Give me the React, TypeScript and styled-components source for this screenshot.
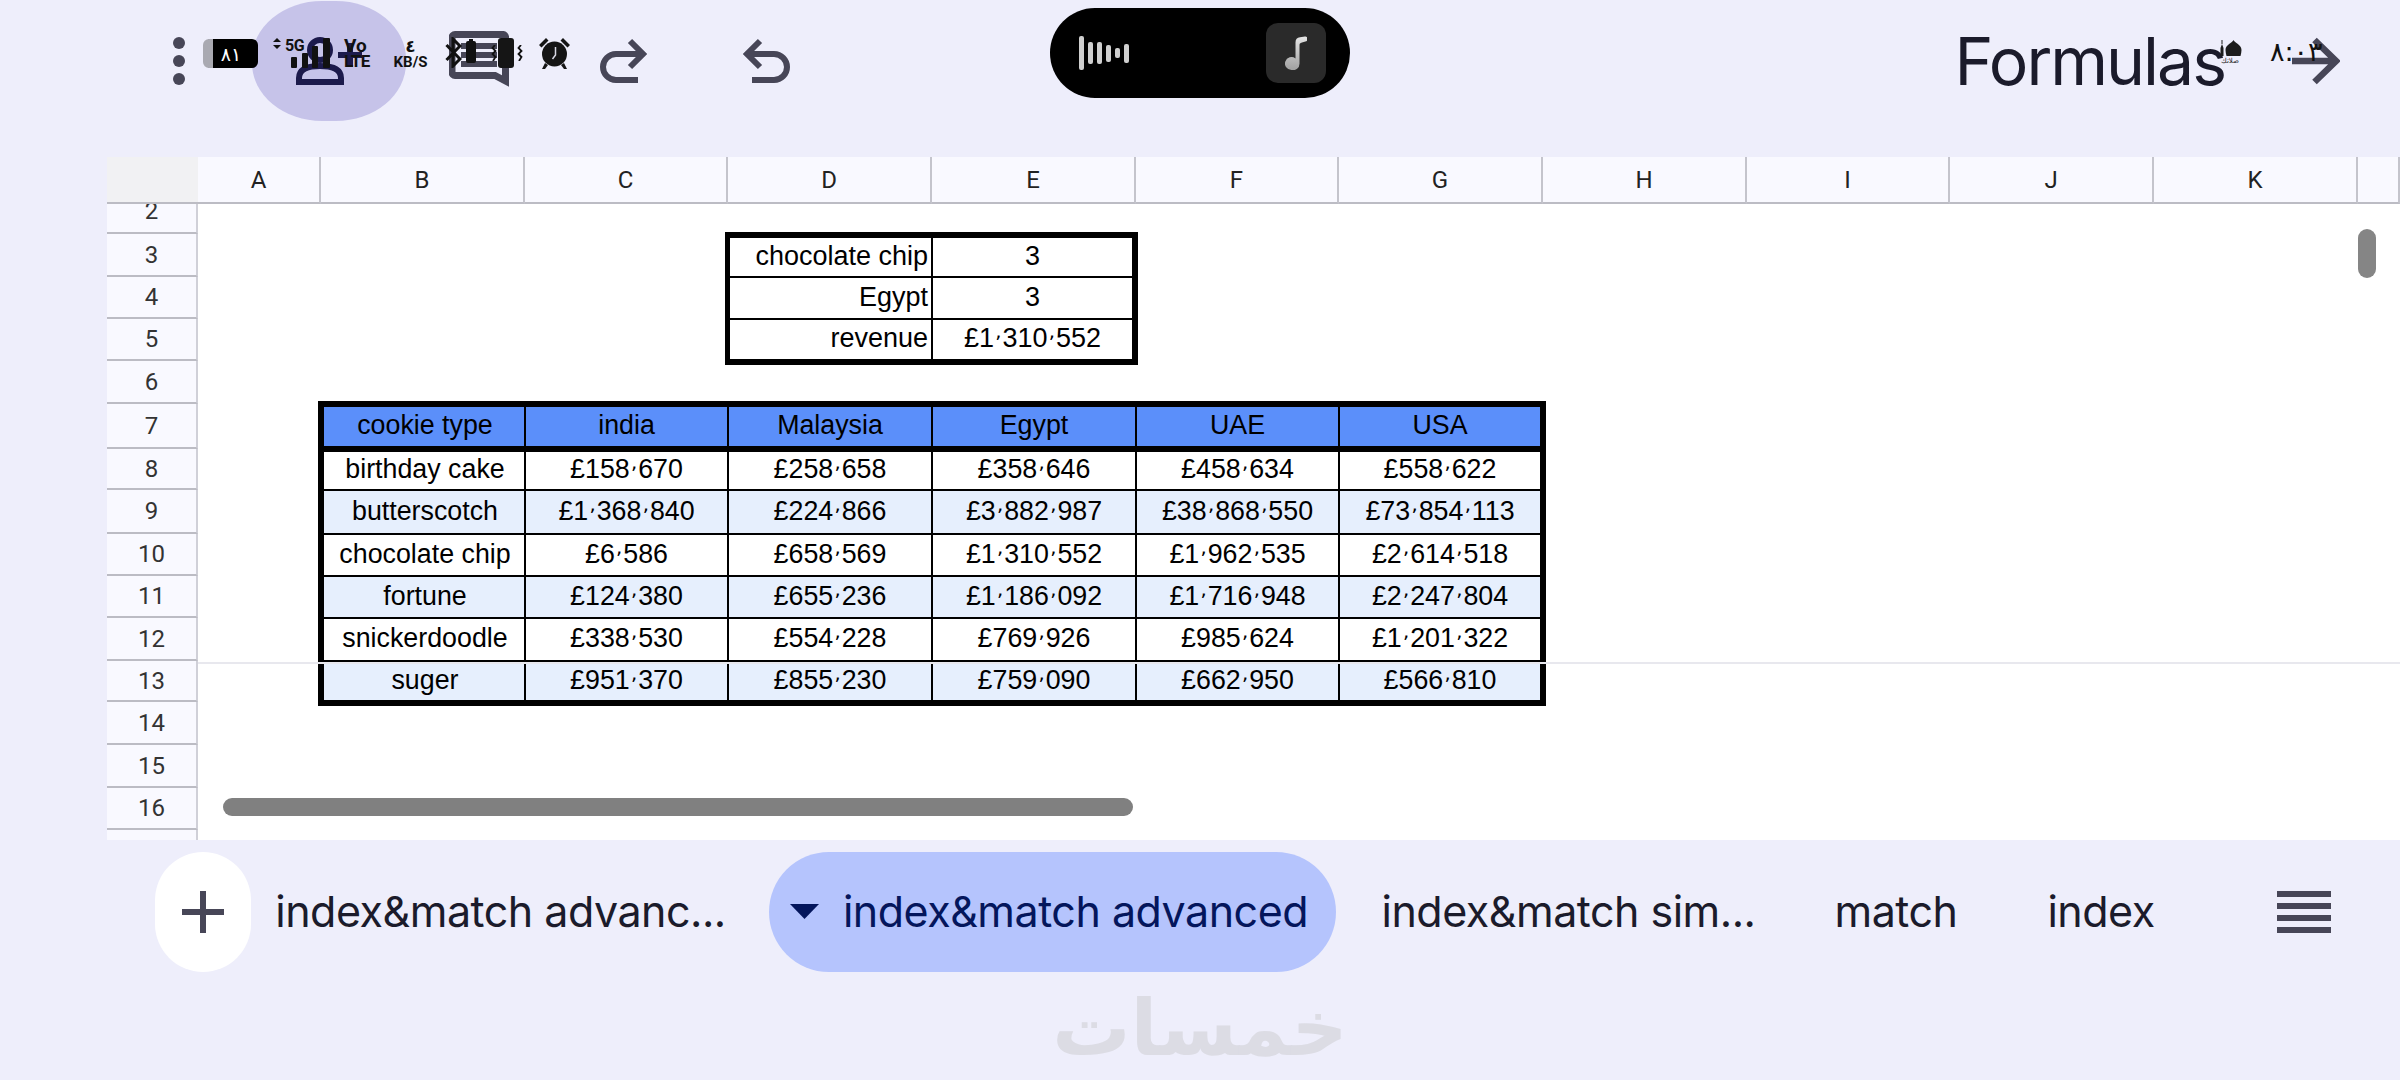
import { Fragment } from "react";
import styled, { createGlobalStyle } from "styled-components";

const COLS = ["A", "B", "C", "D", "E", "F", "G", "H", "I", "J", "K", ""];
const ROWS = [2, 3, 4, 5, 6, 7, 8, 9, 10, 11, 12, 13, 14, 15, 16, 17];

const SMALL_TABLE = [
  ["chocolate chip", "3"],
  ["Egypt", "3"],
  ["revenue", "£1٬310٬552"],
];

const BIG_TABLE = [
  ["cookie type", "india", "Malaysia", "Egypt", "UAE", "USA"],
  ["birthday cake", "£158٬670", "£258٬658", "£358٬646", "£458٬634", "£558٬622"],
  ["butterscotch", "£1٬368٬840", "£224٬866", "£3٬882٬987", "£38٬868٬550", "£73٬854٬113"],
  ["chocolate chip", "£6٬586", "£658٬569", "£1٬310٬552", "£1٬962٬535", "£2٬614٬518"],
  ["fortune", "£124٬380", "£655٬236", "£1٬186٬092", "£1٬716٬948", "£2٬247٬804"],
  ["snickerdoodle", "£338٬530", "£554٬228", "£769٬926", "£985٬624", "£1٬201٬322"],
  ["suger", "£951٬370", "£855٬230", "£759٬090", "£662٬950", "£566٬810"],
];

// the thousands separator comes from another font in the sheet
function Money({ text }: { text: string }) {
  const parts = text.split("٬");
  return (
    <span>
      {parts.map((p, i) => (
        <Fragment key={i}>
          {i > 0 && <Sep>٬</Sep>}
          {p}
        </Fragment>
      ))}
    </span>
  );
}

function App() {
  return (
    <Page>
      <GlobalStyle />
      <TopBar>
        <ToolButton>
          <Dots>
            <Dot />
            <Dot />
            <Dot />
          </Dots>
        </ToolButton>
        <ContactPill>
          <svg width="66" height="48" viewBox="0 0 66 48" fill="none" stroke="#1c1a4c" strokeWidth="6">
            <circle cx="24" cy="13" r="10" />
            <path d="M3 45v-4c0-9 9-12 21-12s21 3 21 12v4z" />
            <path d="M42 18h24M54 6v24" />
          </svg>
        </ContactPill>
        <ToolButton>
          <svg width="60" height="60" viewBox="0 0 60 60" fill="none" stroke="#474657" strokeWidth="7">
            <path d="M6 3.500h47a3 3 0 0 1 3.500 3.500V50L46 44.500H6a3 3 0 0 1-3-3V6.500a3 3 0 0 1 3-3z" />
            <path d="M12 15h36M12 24h36M12 33h36" strokeWidth="6" />
          </svg>
        </ToolButton>
        <ToolButton>
          <svg width="48" height="46" viewBox="0 0 48 46" fill="none" stroke="#474657" strokeWidth="6">
            <path d="M31 3l13 13-13 13M44 16H17a13 13 0 0 0 0 26h22" />
          </svg>
        </ToolButton>
        <ToolButton>
          <svg width="48" height="46" viewBox="0 0 48 46" fill="none" stroke="#474657" strokeWidth="6">
            <path d="M17 3L4 16l13 13M4 16h27a13 13 0 0 1 0 26H9" />
          </svg>
        </ToolButton>
        <TitleGroup>
          <Title>Formulas</Title>
          <svg width="48" height="48" viewBox="0 0 48 48" fill="none" stroke="#474657" strokeWidth="6.500">
            <path d="M0 24h43M22.500 3L44 24 22.500 45" />
          </svg>
        </TitleGroup>

        <StatusLeft>
          <Battery>
            <BatteryLevel>٨١</BatteryLevel>
          </Battery>
          <NetStack>
            <svg width="57" height="31" viewBox="0 0 57 31" fill="#111">
              <path d="M0 5l4-4 4 4zM0 8l4 4 4-4z" />
              <rect x="18" y="20" width="6" height="11" rx="1" />
              <rect x="29" y="16" width="6" height="15" rx="1" />
              <rect x="39" y="9" width="6" height="22" rx="1" />
              <rect x="50" y="1" width="7" height="30" rx="1" />
            </svg>
            <FiveG>5G</FiveG>
          </NetStack>
          <VoStack>
            <VoText>Vo</VoText>
            <LteText>LTE</LteText>
          </VoStack>
          <SpeedStack>
            <SpeedValue>٤</SpeedValue>
            <SpeedUnit>KB/S</SpeedUnit>
          </SpeedStack>
          <BluetoothIcon width="17" height="31" viewBox="0 0 17 31" fill="none" stroke="#111" strokeWidth="3">
            <path d="M1.500 8L15 22l-7 7V2l7 7L1.500 23" />
          </BluetoothIcon>
          <SmallBattery />
          <WaveIcon width="6" height="16" viewBox="0 0 6 16" fill="none" stroke="#111" strokeWidth="1.800" $left={15}>
            <path d="M4 0L1.500 3 4.500 6 1.500 9 4.500 12 2 16" />
          </WaveIcon>
          <PhoneBody />
          <WaveIcon width="6" height="16" viewBox="0 0 6 16" fill="none" stroke="#111" strokeWidth="1.800" $left={3}>
            <path d="M4 0L1.500 3 4.500 6 1.500 9 4.500 12 2 16" />
          </WaveIcon>
          <AlarmIcon width="31" height="32" viewBox="0 0 31 32">
            <circle cx="15.500" cy="17" r="12.500" fill="#151515" />
            <path d="M0 8l7-7 2.500 2.500-7 7zM31 8l-7-7-2.500 2.500 7 7z" fill="#151515" />
            <path d="M6 26l-3 6h3l3-4zM25 26l3 6h-3l-3-4z" fill="#151515" />
            <path d="M16.500 10v8l-3 4" fill="none" stroke="#d8d8e4" strokeWidth="1.500" />
          </AlarmIcon>
        </StatusLeft>

        <Island>
          <Wave>
            <WaveBar $h={34} />
            <WaveBar $h={22} />
            <WaveBar $h={22} />
            <WaveBar $h={17} />
            <WaveBar $h={10} />
            <WaveBar $h={19} />
          </Wave>
          <MusicTile>
            <svg width="22" height="34" viewBox="0 0 22 34" fill="none">
              <defs>
                <linearGradient id="note" x1="0" y1="0" x2="0" y2="1">
                  <stop offset="0" stopColor="#e4e4e4" />
                  <stop offset="1" stopColor="#a0a0a0" />
                </linearGradient>
              </defs>
              <path
                d="M6.500 34a6.500 6.500 0 1 1 4-11.600V6.500C10.500 3 12 1.500 15 1.200L20 0.600a1.800 1.800 0 0 1 .4 4.800L17 6.400c-2 .5-2.500 1-2.500 2.500V27.500A6.500 6.500 0 0 1 6.500 34z"
                fill="url(#note)"
              />
            </svg>
          </MusicTile>
        </Island>

        <StatusRight>
          <Mosque>
            <svg width="24" height="18" viewBox="0 0 24 18" fill="#1c1c1c">
              <path d="M3.500 0h1v4h-1zM2.500 8l1.500-4 1.500 4v8h-3z" />
              <path d="M15.500 0c1 3 8 4.500 8 10 0 2-.5 4-1 6H8.500c-.5-2-1-4-1-6 0-5.500 7-7 8-10z" />
            </svg>
            <MosqueLabel>صلاتك</MosqueLabel>
          </Mosque>
          <Clock>٨:٠٣</Clock>
        </StatusRight>
      </TopBar>

      <Sheet>
        <Corner />
        {COLS.map((c, i) => (
          <ColHead key={i} $col={i + 2}>
            {c}
          </ColHead>
        ))}
        {ROWS.map((r) => (
          <RowHead key={r} $row={r} $clipped={r === 2} $open={r === 17}>
            {r === 17 ? "" : r}
          </RowHead>
        ))}

        <SmallGrid>
          {SMALL_TABLE.map((row, i) => (
            <Fragment key={i}>
              <LabelCell $last={i === 2}>{row[0]}</LabelCell>
              <ValueCell $last={i === 2}>
                <Money text={row[1]} />
              </ValueCell>
            </Fragment>
          ))}
        </SmallGrid>

        <BigGrid>
          {BIG_TABLE.flatMap((row, r) =>
            row.map((text, c) => (
              <DataCell
                key={r + "-" + c}
                $head={r === 0}
                $stripe={r > 0 && r % 2 === 0}
                $lastCol={c === 5}
                $lastRow={r === 6}
              >
                <Money text={text} />
              </DataCell>
            ))
          )}
        </BigGrid>

        <FreezeLine />
        <HScroll />
        <VScroll />
      </Sheet>

      <BottomBar>
        <TabRow>
          <AddButton>
            <svg width="42" height="42" viewBox="0 0 42 42" stroke="#474657" strokeWidth="6">
              <path d="M0 21h42M21 0v42" />
            </svg>
          </AddButton>
          <Tab $w={499}>index&amp;match advanc...</Tab>
          <ActiveTab>
            <svg width="29" height="15" viewBox="0 0 29 15" fill="#04165c">
              <path d="M0 0h29L14.500 15z" />
            </svg>
            index&amp;match advanced
          </ActiveTab>
          <Tab $w={465}>index&amp;match sim...</Tab>
          <Tab $w={190}>match</Tab>
          <Tab $w={220}>index</Tab>
          <MenuLines>
            <MenuLine />
            <MenuLine />
            <MenuLine />
            <MenuLine />
          </MenuLines>
        </TabRow>
        <Watermark>خمسات</Watermark>
      </BottomBar>
    </Page>
  );
}

export default App;

const GlobalStyle = createGlobalStyle`
  html, body {
    margin: 0;
    padding: 0;
    background: #eeeefb;
    overflow: hidden;
  }
`;

const Page = styled.div`
  width: 2400px;
  height: 1080px;
  background: #eeeefb;
  display: flex;
  flex-direction: column;
  font-family: "Liberation Sans", Arial, sans-serif;
  overflow: hidden;
`;

const TopBar = styled.div`
  position: relative;
  height: 157px;
  flex: none;
  padding: 1px 60px 0 107px;
  box-sizing: border-box;
  display: flex;
  align-items: flex-start;
`;

const ToolButton = styled.div`
  width: 144px;
  height: 120px;
  display: flex;
  align-items: center;
  justify-content: center;
`;

const Dots = styled.div`
  display: flex;
  flex-direction: column;
  gap: 6px;
`;

const Dot = styled.span`
  width: 12px;
  height: 12px;
  border-radius: 50%;
  background: #474657;
`;

const ContactPill = styled.div`
  width: 154px;
  height: 120px;
  margin: 0 1px;
  border-radius: 70px / 58px;
  background: #c6c3e9;
  display: flex;
  align-items: center;
  justify-content: center;
`;

const TitleGroup = styled.div`
  margin-left: auto;
  height: 120px;
  display: flex;
  align-items: center;
  gap: 67px;
`;

const Title = styled.div`
  font-family: "Inter", sans-serif;
  font-size: 66px;
  font-weight: 400;
  letter-spacing: -2px;
  color: #1b1b2b;
`;

const StatusLeft = styled.div`
  position: absolute;
  left: 203px;
  top: 37px;
  height: 32px;
  display: flex;
  align-items: flex-start;
`;

const Battery = styled.div`
  width: 55px;
  height: 29px;
  margin-top: 2px;
  box-sizing: border-box;
  padding-right: 9px;
  border-left: 10px solid #a9a9b1;
  border-radius: 6px;
  background: #000;
  display: flex;
  align-items: center;
  justify-content: center;
`;

const BatteryLevel = styled.span`
  font-family: "DejaVu Sans", sans-serif;
  font-size: 19px;
  line-height: 24px;
  color: #fff;
`;

const NetStack = styled.div`
  position: relative;
  width: 71px;
  height: 32px;
  margin-left: 15px;
`;

const FiveG = styled.span`
  position: absolute;
  left: 12px;
  top: -1px;
  font-family: "Roboto", sans-serif;
  font-size: 16px;
  font-weight: 700;
  letter-spacing: -0.500px;
  color: #111;
`;

const VoStack = styled.div`
  width: 27px;
  display: flex;
  flex-direction: column;
  color: #111;
  font-family: "Roboto", sans-serif;
  font-weight: 700;
`;

const VoText = styled.span`
  font-size: 19px;
  line-height: 17px;
`;

const LteText = styled.span`
  font-size: 17px;
  line-height: 15px;
  letter-spacing: -0.500px;
`;

const SpeedStack = styled.div`
  width: 37px;
  margin-left: 21px;
  display: flex;
  flex-direction: column;
  align-items: center;
  color: #111;
`;

const SpeedValue = styled.span`
  font-family: "DejaVu Sans", sans-serif;
  font-size: 17px;
  font-weight: 700;
  line-height: 18px;
`;

const SpeedUnit = styled.span`
  font-family: "Roboto", sans-serif;
  font-size: 15px;
  font-weight: 700;
  line-height: 14px;
`;

const BluetoothIcon = styled.svg`
  margin-left: 16px;
`;

const SmallBattery = styled.div`
  width: 10px;
  height: 22px;
  margin: 4px 0 0 4px;
  border-radius: 2px;
  background: #111;
  position: relative;

  &::before {
    content: "";
    position: absolute;
    left: 3px;
    top: -2px;
    width: 4px;
    height: 2px;
    background: #111;
  }
`;

const WaveIcon = styled.svg<{ $left: number }>`
  margin: 8px 0 0 ${(p) => p.$left}px;
`;

const PhoneBody = styled.div`
  width: 16px;
  height: 30px;
  margin: 1px 0 0 1px;
  border-radius: 3px;
  background: #151515;
`;

const AlarmIcon = styled.svg`
  margin-left: 16px;
`;

const Island = styled.div`
  position: absolute;
  left: 1050px;
  top: 8px;
  width: 300px;
  height: 90px;
  box-sizing: border-box;
  padding: 0 24px 0 29px;
  border-radius: 45px;
  background: #000;
  display: flex;
  align-items: center;
  justify-content: space-between;
`;

const Wave = styled.div`
  display: flex;
  align-items: center;
  gap: 4px;
`;

const WaveBar = styled.span<{ $h: number }>`
  width: 5px;
  height: ${(p) => p.$h}px;
  border-radius: 2px;
  background: #cfcfcf;
`;

const MusicTile = styled.div`
  width: 60px;
  height: 60px;
  border-radius: 12px;
  background: #2a2a2a;
  display: flex;
  align-items: center;
  justify-content: center;
`;

const StatusRight = styled.div`
  position: absolute;
  left: 2218px;
  top: 40px;
  display: flex;
  align-items: flex-start;
  gap: 28px;
`;

const Mosque = styled.div`
  width: 24px;
  display: flex;
  flex-direction: column;
  align-items: center;
`;

const MosqueLabel = styled.span`
  font-family: "DejaVu Sans", sans-serif;
  font-size: 7px;
  line-height: 7px;
  color: #222;
  white-space: nowrap;
`;

const Clock = styled.span`
  font-family: "DejaVu Sans", sans-serif;
  font-size: 27px;
  line-height: 24px;
  color: #111;
`;

const Sheet = styled.div`
  position: relative;
  margin-left: 107px;
  width: 2293px;
  height: 683px;
  flex: none;
  overflow: hidden;
  background: #fff;
  display: grid;
  grid-template-columns: 91px 123px 204px 203px 204px 204px 203px 204px 204px 203px 204px 204px 42px;
  grid-template-rows: 47px 30px 43px 42px 42px 43px 45px 41px 44px 42px 42px 43px 41px 43px 43px 42px 10px;
`;

const Corner = styled.div`
  grid-column: 1;
  grid-row: 1;
  box-sizing: border-box;
  background: #f1f1f3;
  border-bottom: 2px solid #bcbcc4;
`;

const ColHead = styled.div<{ $col: number }>`
  grid-row: 1;
  grid-column: ${(p) => p.$col};
  box-sizing: border-box;
  background: #f9f9ff;
  border-bottom: 2px solid #bcbcc4;
  border-right: 2px solid #c4c4cc;
  display: flex;
  align-items: center;
  justify-content: center;
  font-family: "Roboto", sans-serif;
  font-size: 24px;
  color: #222;
`;

const RowHead = styled.div<{ $row: number; $clipped?: boolean; $open?: boolean }>`
  grid-column: 1;
  grid-row: ${(p) => p.$row};
  box-sizing: border-box;
  background: #f9f9ff;
  border-bottom: ${(p) => (p.$open ? "none" : "2px solid #bcbcc4")};
  border-right: 2px solid #d0d0d8;
  padding-bottom: ${(p) => (p.$clipped ? "14px" : "0")};
  display: flex;
  align-items: center;
  justify-content: center;
  font-family: "Roboto", sans-serif;
  font-size: 24px;
  line-height: 24px;
  color: #333;
  overflow: hidden;
`;

const Sep = styled.span`
  display: inline-block;
  width: 8.500px;
  text-align: center;
  font-family: "DejaVu Sans", sans-serif;
  font-size: 20px;
  line-height: 1;
  transform: translateY(3px);
`;

const SmallGrid = styled.div`
  grid-column: 5 / 7;
  grid-row: 3 / 6;
  margin: -2px -2px -4px -3px;
  border: 6px solid #000;
  border-left-width: 5px;
  box-sizing: border-box;
  background: #fff;
  display: grid;
  grid-template-columns: 203px 1fr;
  grid-template-rows: 40px 42px 1fr;
  font-size: 27px;
  color: #000;
`;

const LabelCell = styled.div<{ $last?: boolean }>`
  box-sizing: border-box;
  border-right: 2px solid #000;
  border-bottom: ${(p) => (p.$last ? "none" : "2px solid #000")};
  padding: 0 3px 2px 0;
  display: flex;
  align-items: center;
  justify-content: flex-end;
`;

const ValueCell = styled.div<{ $last?: boolean }>`
  box-sizing: border-box;
  border-bottom: ${(p) => (p.$last ? "none" : "2px solid #000")};
  padding-bottom: 2px;
  display: flex;
  align-items: center;
  justify-content: center;
`;

const BigGrid = styled.div`
  grid-column: 3 / 9;
  grid-row: 7 / 14;
  margin: -3px -3px -4px -3px;
  border: 6px solid #000;
  box-sizing: border-box;
  background: #fff;
  display: grid;
  grid-template-columns: 202px 203px 204px 204px 203px 1fr;
  grid-template-rows: 45px 39px 44px 42px 42px 43px 1fr;
  font-size: 26.800px;
  color: #000;
`;

const DataCell = styled.div<{ $head?: boolean; $stripe?: boolean; $lastCol?: boolean; $lastRow?: boolean }>`
  box-sizing: border-box;
  background: ${(p) => (p.$head ? "#5b8ffa" : p.$stripe ? "#e6effd" : "#fff")};
  border-right: ${(p) => (p.$lastCol ? "none" : "2px solid #000")};
  border-bottom: ${(p) => (p.$lastRow ? "none" : p.$head ? "6px solid #000" : "2px solid #000")};
  padding-bottom: 2px;
  display: flex;
  align-items: center;
  justify-content: center;
  white-space: nowrap;

  &:nth-child(6n + 1) {
    padding-left: 2px;
  }
`;

const FreezeLine = styled.div`
  grid-column: 2 / -1;
  grid-row: 13;
  align-self: start;
  margin-top: 1px;
  height: 2px;
  background: #e8e8ee;
  z-index: 2;
`;

const HScroll = styled.div`
  position: absolute;
  left: 116px;
  top: 641px;
  width: 910px;
  height: 18px;
  border-radius: 9px;
  background: #808080;
`;

const VScroll = styled.div`
  position: absolute;
  left: 2251px;
  top: 72px;
  width: 18px;
  height: 49px;
  border-radius: 9px;
  background: #858585;
`;

const BottomBar = styled.div`
  flex: 1;
  padding-top: 12px;
  display: flex;
  flex-direction: column;
`;

const TabRow = styled.div`
  height: 120px;
  padding-left: 155px;
  display: flex;
  align-items: center;
`;

const AddButton = styled.div`
  width: 96px;
  height: 120px;
  flex: none;
  border-radius: 48px;
  background: #fff;
  display: flex;
  align-items: center;
  justify-content: center;
`;

const Tab = styled.div<{ $w: number }>`
  width: ${(p) => p.$w}px;
  flex: none;
  padding-bottom: 2px;
  text-align: center;
  font-family: "Inter", sans-serif;
  font-size: 43px;
  letter-spacing: -0.500px;
  color: #1b1b2b;
  white-space: nowrap;
`;

const ActiveTab = styled.div`
  width: 567px;
  height: 120px;
  flex: none;
  box-sizing: border-box;
  padding: 0 7px 2px 0;
  margin-left: 19px;
  border-radius: 60px;
  background: #b5c4fd;
  display: flex;
  align-items: center;
  justify-content: center;
  gap: 24px;
  font-family: "Inter", sans-serif;
  font-size: 43px;
  letter-spacing: -0.500px;
  color: #04165c;
  white-space: nowrap;
`;

const MenuLines = styled.div`
  width: 54px;
  margin-left: 66px;
  display: flex;
  flex-direction: column;
  gap: 6px;
`;

const MenuLine = styled.span`
  height: 6px;
  background: #474657;
`;

const Watermark = styled.div`
  margin-top: 17px;
  text-align: center;
  font-family: "DejaVu Sans", sans-serif;
  font-size: 78px;
  line-height: 78px;
  font-weight: 700;
  color: #dcdce4;
`;
